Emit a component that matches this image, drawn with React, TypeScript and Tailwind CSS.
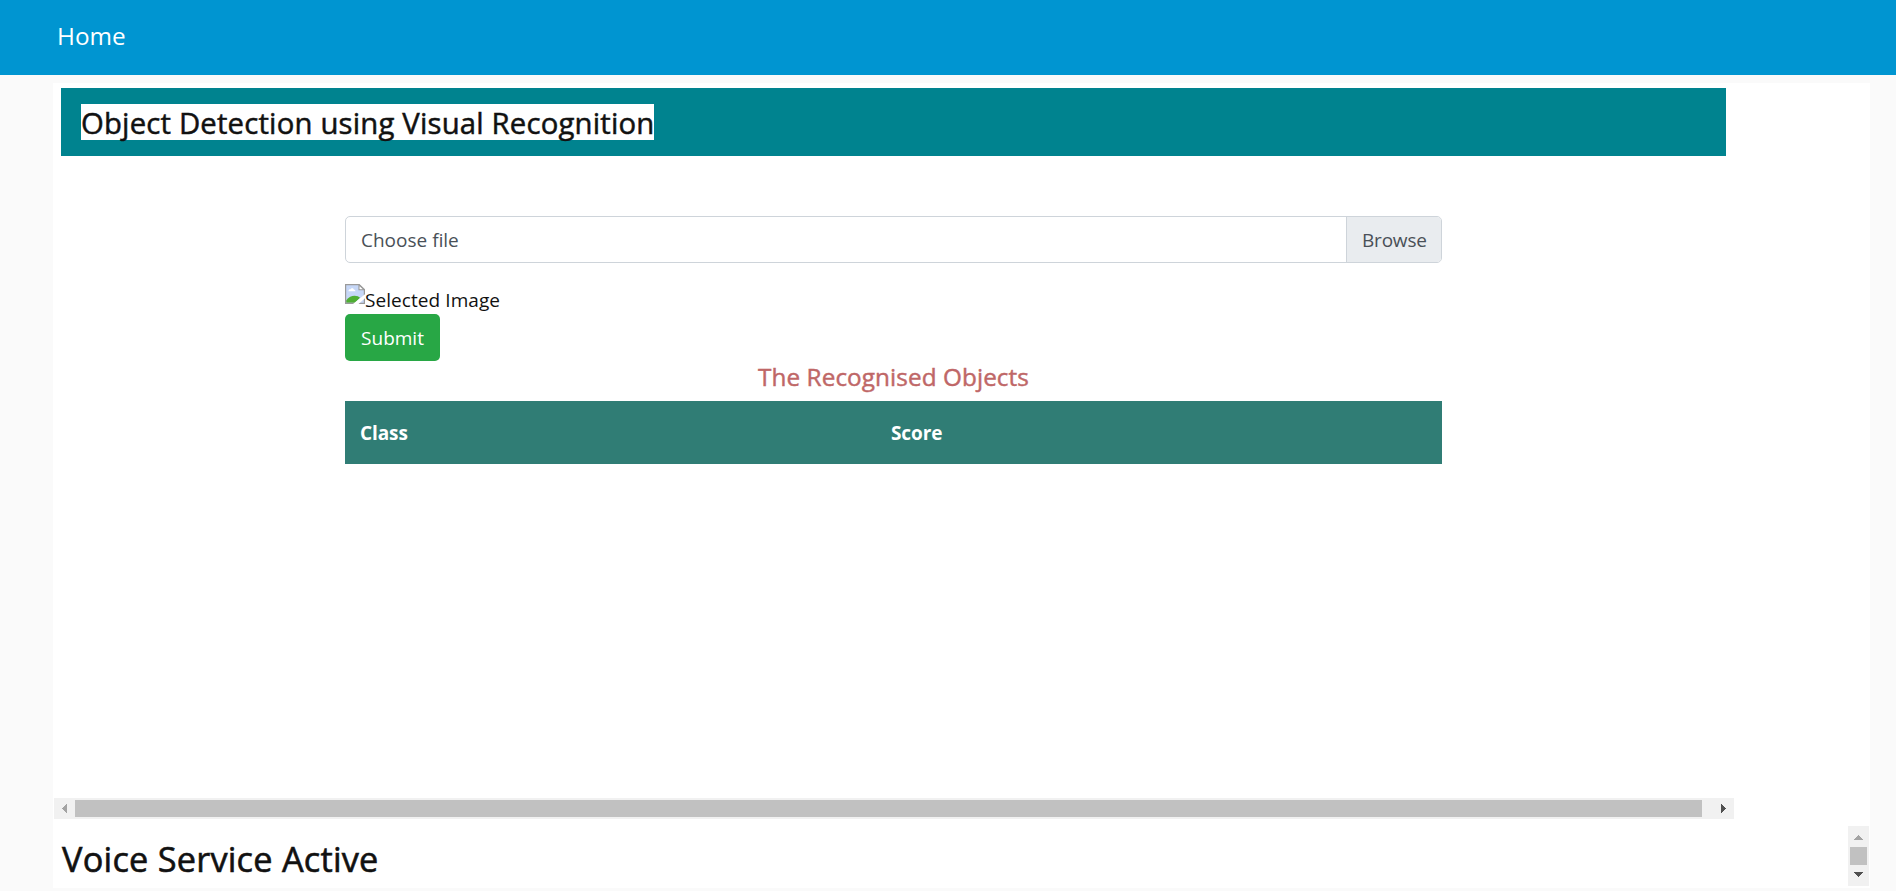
import type { ReactNode } from 'react';

function Arrow({ d, w, h, fill }: { d: string; w: number; h: number; fill: string }) {
  return (
    <svg width={w} height={h} viewBox={`0 0 ${w} ${h}`} shapeRendering="crispEdges" fill={fill} className="block">
      <path d={d} />
    </svg>
  );
}

function BrokenImage() {
  return (
    <svg width="20" height="20" viewBox="0 0 20 20" className="block shrink-0">
      <path d="M.6.6h13.600l5.200 5v13.800H.600z" fill="#c6d7f7" />
      <path d="M3.500 7.200c0-1.300 1-2 2-1.800.5-1.600 3-1.600 3.300.1 1 0 1.600.8 1.600 1.700z" fill="#fff" />
      <path d="M1.200 18.800v-2.600c2.500-3 5.500-4.400 8.300-4.400 2.500 0 4.500.8 5.500 2L10 18.800z" fill="#4fae33" />
      <path d="M.6.6h13.600l5.200 5v13.800H.600z" fill="none" stroke="#9a9a9a" strokeWidth="1.200" />
      <path d="M14 .8v5h5.200z" fill="#fff" stroke="#9a9a9a" strokeWidth="1.100" />
      <path d="M20 10.200v4L13.500 20H8z" fill="#fff" />
    </svg>
  );
}

function HeaderCell({ children, className }: { children: ReactNode; className?: string }) {
  return (
    <th className={`p-[15px] text-left align-middle text-[19px] leading-[30px] font-bold tracking-[-0.1px] ${className ?? ''}`}>
      {children}
    </th>
  );
}

export default function App() {
  return (
    <div className="h-[891px] overflow-hidden bg-[#fafafa] font-['Open_Sans','Noto_Sans',sans-serif] text-[#212529]">
      <nav className="flex h-[75px] items-center bg-[#0095d1] pb-[3px] pl-[57px]">
        <a href="#" className="text-[24.3px] leading-[36px] text-white">Home</a>
      </nav>
      <main className="mt-2 mr-[26px] ml-[53px] flex h-[805px] flex-col bg-white">
        <section className="ml-px flex h-[736px] w-[1680px] flex-col">
          <div className="mr-2 ml-[7px] mt-[5px] flex h-[68px] items-center bg-[#00838f] pl-5">
            <h1 className="h-9 w-[573px] bg-white text-[29.3px] leading-[38px] font-medium tracking-[0.18px] whitespace-nowrap text-[#111] [-webkit-text-stroke:0.5px_#111]">
              Object Detection using Visual Recognition
            </h1>
          </div>
          <div className="mt-[60px] ml-[291px] w-[1097px]">
            <label className="flex h-[47px] overflow-hidden rounded-[5px] border border-[#ced4da] text-[19px] text-[#495057]">
              <span className="flex-1 pl-[15px] leading-[47px]">Choose file</span>
              <span className="w-[95px] border-l border-[#ced4da] bg-[#e9ecef] pl-[15px] leading-[47px] tracking-[-0.2px]">Browse</span>
            </label>
            <div className="mt-[21px] flex h-[30px]">
              <BrokenImage />
              <span className="text-[19px] leading-[32px] tracking-[0.07px] text-[#111]">Selected Image</span>
            </div>
            <button className="block h-[47px] w-[95px] rounded-[5px] bg-[#28a745] text-[19px] leading-[48px] text-white">Submit</button>
            <h2 className="h-[40px] text-center text-[24.3px] leading-[32px] font-medium tracking-[0.08px] text-[#bf6767] [-webkit-text-stroke:0.45px_#bf6767]">
              The Recognised Objects
            </h2>
            <table className="h-[63px] w-full table-fixed bg-[#307d75] text-white">
              <thead>
                <tr>
                  <HeaderCell className="w-[531px]">Class</HeaderCell>
                  <HeaderCell>Score</HeaderCell>
                </tr>
              </thead>
            </table>
          </div>
          <div className="mt-auto flex h-[21px] items-center bg-[#f1f1f1]">
            <div className="flex w-[21px] justify-center">
              <Arrow w={5} h={9} fill="#a3a3a3" d="M5 0v9L0 4.500z" />
            </div>
            <div className="h-[17px] w-[1627px] bg-[#c1c1c1]" />
            <div className="ml-[19px]">
              <Arrow w={5} h={9} fill="#505050" d="M0 0v9l5-4.500z" />
            </div>
          </div>
        </section>
        <section className="mt-[7px] flex h-[60px] justify-between pr-px pl-[9px]">
          <h2 className="text-[34.3px] leading-[66px] font-medium tracking-[0.22px] text-[#111] [-webkit-text-stroke:0.6px_#111]">
            Voice Service Active
          </h2>
          <div className="flex w-[21px] flex-col items-center bg-[#f1f1f1] pt-[9px]">
            <Arrow w={9} h={5} fill="#a3a3a3" d="M0 5h9L4.500 0z" />
            <div className="my-[7px] h-[18px] w-[17px] bg-[#c1c1c1]" />
            <Arrow w={9} h={5} fill="#505050" d="M0 0h9L4.500 5z" />
          </div>
        </section>
      </main>
    </div>
  );
}
